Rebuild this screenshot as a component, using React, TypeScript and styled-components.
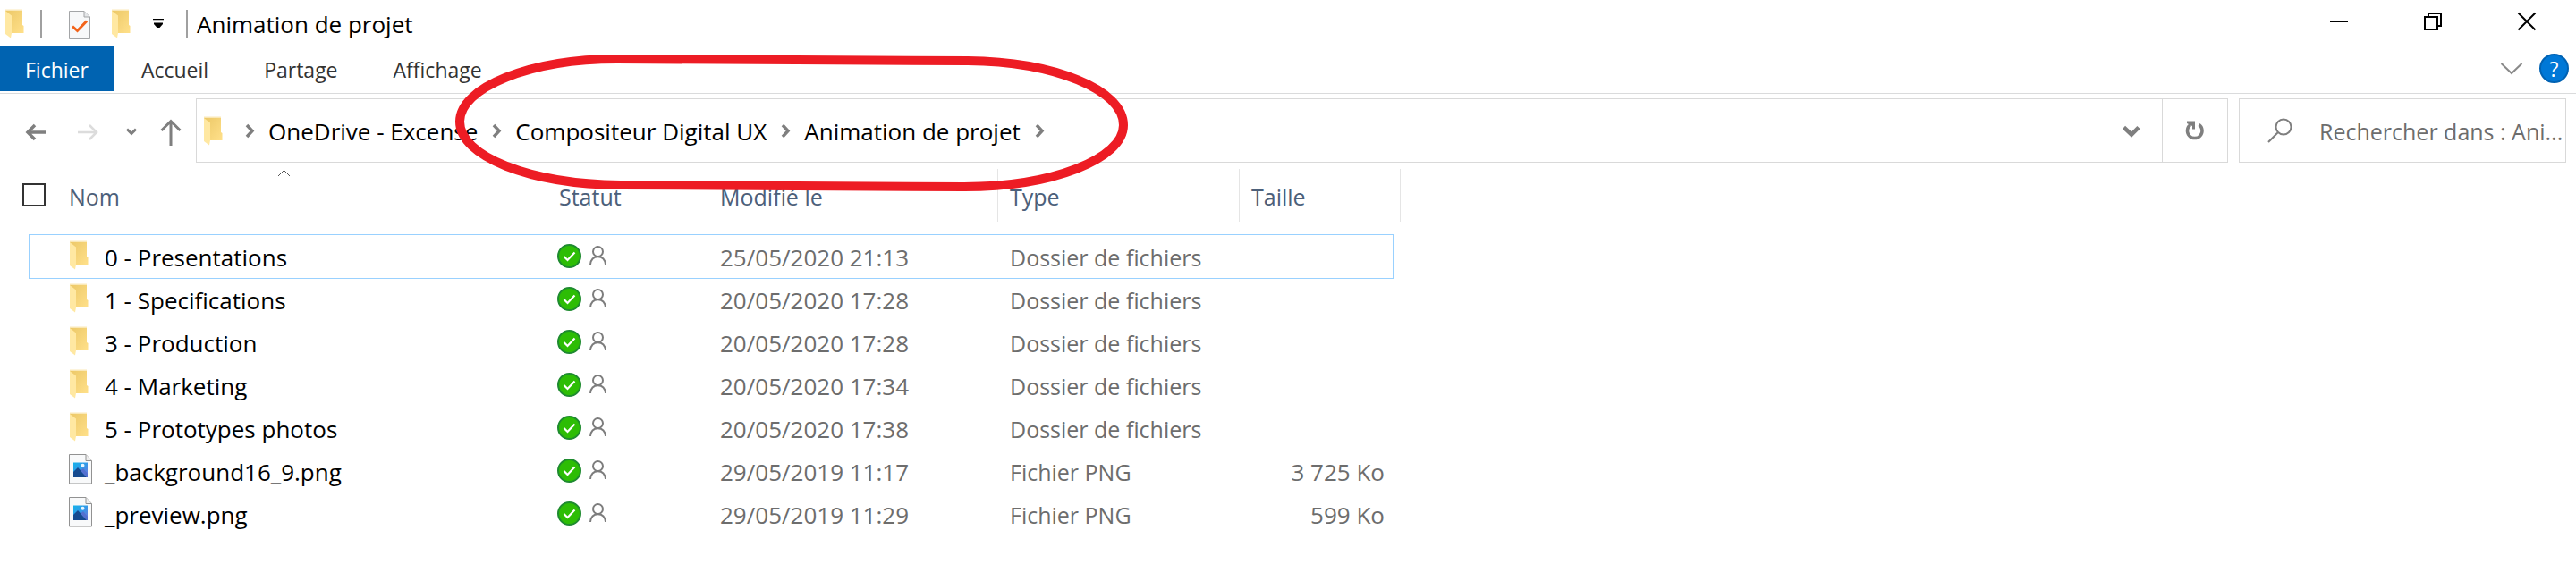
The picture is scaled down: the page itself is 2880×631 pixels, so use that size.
import React from "react";
import styled, { createGlobalStyle } from "styled-components";

const GlobalStyle = createGlobalStyle`
  *, *::before, *::after { box-sizing: border-box; }
  body {
    margin: 0;
    background: #fff;
    color: #000;
    font-family: "Open Sans", "Noto Sans", sans-serif;
    font-size: 25px;
    line-height: 34px;
  }
  svg { display: block; flex: none; }
`;

const Window = styled.div`
  position: relative;
  width: 100%;
  overflow: hidden;
`;

const IconButton = styled.button`
  display: flex;
  padding: 0;
  border: 0;
  background: none;
  color: inherit;
`;

const TitleBar = styled.header`
  display: flex;
  align-items: center;
  height: 51px;
  padding: 2px 43px 0 5px;
`;

const Divider = styled.span`
  width: 2px;
  height: 31px;
  background: #a0a0a0;
`;

const QuickAccess = styled.div`
  display: flex;
  align-items: center;
  gap: 19px;
  margin: 0 25px 0 30px;
`;

const AppIcon = styled.div`
  margin-right: 12px;
`;

const Title = styled.h1`
  margin: 0 0 0 10px;
  font-size: 26px;
  font-weight: 400;
`;

const WindowControls = styled.div`
  display: flex;
  gap: 81px;
  margin-left: auto;
  padding-bottom: 5px;
`;

const TabBar = styled.nav`
  display: flex;
  align-items: flex-start;
  height: 54px;
  border-bottom: 1px solid #dadbdc;
`;

const Tab = styled.button<{ $primary?: boolean }>`
  height: 51px;
  padding: ${(p) => (p.$primary ? "2px 28px 0" : "3px 31px 0")};
  border: 0;
  background: ${(p) => (p.$primary ? "#0063b1" : "transparent")};
  color: ${(p) => (p.$primary ? "#fff" : "#333")};
  font: inherit;
  font-size: 23px;
`;

const TabTools = styled.div`
  display: flex;
  align-items: center;
  gap: 18px;
  height: 51px;
  margin-left: auto;
  padding-right: 8px;
`;

const HelpButton = styled.button`
  width: 33px;
  height: 33px;
  padding: 0;
  border: 2px solid #0062b3;
  border-radius: 50%;
  background: #0078d7;
  color: #fff;
  font: inherit;
  font-size: 23px;
  line-height: 28px;
`;

const NavBar = styled.div`
  display: flex;
  padding: 5px 11px 0 28px;
`;

const NavButtons = styled.div`
  display: flex;
  align-items: center;
  padding: 4px 15px 0 0;
`;

const BackForward = styled.div`
  display: flex;
  gap: 34px;
  margin-right: 30px;
`;

const RecentButton = styled(IconButton)`
  margin-right: 24px;
`;

const AddressBar = styled.div`
  display: flex;
  flex: 1;
  min-width: 0;
  height: 72px;
  margin-right: 12px;
  border: 1px solid #d9d9d9;
`;

const Breadcrumbs = styled.div`
  display: flex;
  flex: 1;
  align-items: center;
  gap: 15px;
  min-width: 0;
  padding: 2px 0 0 7px;
  font-size: 26px;
  white-space: nowrap;
`;

const AddressIcon = styled.span`
  padding-right: 3px;
`;

const Crumb = styled.a`
  color: #000;
  text-decoration: none;
`;

const HistoryButton = styled(IconButton)`
  align-items: center;
  padding: 2px 25px 0;
`;

const RefreshButton = styled(IconButton)`
  align-items: center;
  justify-content: center;
  width: 73px;
  border-left: 1px solid #d9d9d9;
`;

const SearchBox = styled.label`
  display: flex;
  align-items: center;
  gap: 30px;
  width: 366px;
  height: 72px;
  padding-left: 31px;
  border: 1px solid #d9d9d9;
`;

const SearchInput = styled.input`
  flex: 1;
  min-width: 0;
  height: 60px;
  padding: 2px 0 0;
  border: 0;
  outline: 0;
  background: none;
  font: inherit;
  &::placeholder { color: #6d6d6d; opacity: 1; }
`;

const FileTable = styled.table`
  display: block;
  margin-top: 7px;
`;

const TableHead = styled.thead`
  display: block;
  margin-bottom: 14px;
`;

const TableBody = styled.tbody`
  display: block;
  padding-bottom: 2px;
`;

const HeadRow = styled.tr`
  display: grid;
  grid-template-columns: 612px 180px 324px 270px 180px;
`;

const HeadCell = styled.th`
  position: relative;
  display: flex;
  gap: 26px;
  height: 59px;
  padding: 14px 0 0 13px;
  border-right: 1px solid #e5e5e5;
  color: #4c607a;
  font-weight: 400;
  text-align: left;
  &:first-child { padding-left: 25px; }
`;

const SelectAll = styled.input`
  appearance: none;
  width: 26px;
  height: 26px;
  margin: 2px 0 0;
  border: 2px solid #333;
  background: #fff;
`;

const SortMark = styled.span`
  position: absolute;
  top: 0;
  left: 310px;
`;

const Row = styled.tr<{ $focused?: boolean }>`
  display: grid;
  grid-template-columns: 579px 180px 324px 270px 171px;
  width: 1526px;
  height: 50px;
  margin: 0 0 -2px 32px;
  border: 1px solid ${(p) => (p.$focused ? "#99d1ff" : "transparent")};
`;

const Cell = styled.td`
  display: flex;
  align-items: center;
  padding: 2px 0 0 13px;
  color: #6d6d6d;
`;

const NameCell = styled(Cell)`
  gap: 12px;
  padding-left: 44px;
  color: #000;
  font-size: 26px;
`;

const FileIcon = styled.span`
  align-self: flex-start;
  padding-top: 3px;
`;

const StatusCell = styled(Cell)`
  gap: 8px;
  padding-left: 11px;
`;

const NumberCell = styled(Cell)`
  font-size: 26px;
`;

const SizeCell = styled(NumberCell)`
  justify-content: flex-end;
  padding-right: 9px;
`;

const Annotation = styled.svg`
  position: absolute;
  top: 50px;
  left: 500px;
  pointer-events: none;
`;

const FolderIcon = () => (
  <svg width="28" height="36" viewBox="0 0 28 36" aria-hidden="true">
    <defs>
      <linearGradient id="folderBack" x1="0" x2="1" y1="0" y2="1">
        <stop offset="0" stopColor="#ecc867" />
        <stop offset="1" stopColor="#ffe08a" />
      </linearGradient>
    </defs>
    <path d="M1 2.5H20V19L21.5 20V28H7L1 6Z" fill="url(#folderBack)" />
    <path d="M1 3L8 8.500V28L7 33.500L1 29Z" fill="#ffe8a2" />
    <path d="M1 2H20" stroke="#fbe9b8" />
  </svg>
);

const PictureIcon = () => (
  <svg width="28" height="36" viewBox="0 0 28 36" aria-hidden="true">
    <defs>
      <linearGradient id="sky" x1="0" x2="1" y1="0" y2="1">
        <stop offset="0" stopColor="#15b1ea" />
        <stop offset="0.5" stopColor="#3399e8" />
        <stop offset="1" stopColor="#7a6fd8" />
      </linearGradient>
    </defs>
    <path d="M.5 .5H19L25.500 7.500V33H.5Z" fill="#f8f9fa" stroke="#929292" />
    <path d="M19 .5V7.500H25.500" fill="#eee" stroke="#929292" />
    <path d="M5 9.500H21V26H5Z" fill="url(#sky)" />
    <path d="M5 20L10 15L20 26H5Z" fill="#164a8f" />
    <path d="M13 18.500L16 16L21 22V26H20Z" fill="#5470cf" />
    <circle cx="15.500" cy="12.800" r="2" fill="#e8f6ff" />
  </svg>
);

const PropertiesIcon = () => (
  <svg width="28" height="36" viewBox="0 0 28 36" aria-hidden="true">
    <path d="M.5 3.500H17L23.500 10V34.500H.5Z" fill="#f7f8f9" stroke="#a3a5a7" />
    <path d="M17 3.500V10H23.500" fill="#e4e6e8" stroke="#a3a5a7" />
    <path d="M4 20.500L9.500 25.500L20 14.500" fill="none" stroke="#f2631a" strokeWidth="3" />
  </svg>
);

const SyncedIcon = () => (
  <svg width="28" height="31" viewBox="0 0 28 31" role="img" aria-label="Disponible">
    <circle cx="13.500" cy="13.500" r="12.500" fill="#2dbd05" stroke="#1f8b30" strokeWidth="2" />
    <path d="M7.500 14L11.500 18L19.500 9.500" fill="none" stroke="#fff" strokeWidth="2.200" />
  </svg>
);

const PersonIcon = () => (
  <svg width="20" height="31" viewBox="0 0 20 31" role="img" aria-label="Partagé">
    <g fill="none" stroke="#7d7d7d" strokeWidth="2">
      <circle cx="9.500" cy="8.500" r="5.500" />
      <path d="M1 23C1.500 17.500 4.500 14.200 9.500 14.200S17.500 17.500 18 23" />
    </g>
  </svg>
);

const CrumbChevron = () => (
  <svg width="12" height="18" viewBox="0 0 12 18" aria-hidden="true">
    <path d="M3 2L9 8.500L3 15" fill="none" stroke="#7f7f7f" strokeWidth="3.500" />
  </svg>
);

type FileEntry = { name: string; date: string; type: string; size?: string };

const folder = "Dossier de fichiers";
const files: FileEntry[] = [
  { name: "0 - Presentations", date: "25/05/2020 21:13", type: folder },
  { name: "1 - Specifications", date: "20/05/2020 17:28", type: folder },
  { name: "3 - Production", date: "20/05/2020 17:28", type: folder },
  { name: "4 - Marketing", date: "20/05/2020 17:34", type: folder },
  { name: "5 - Prototypes photos", date: "20/05/2020 17:38", type: folder },
  { name: "_background16_9.png", date: "29/05/2019 11:17", type: "Fichier PNG", size: "3 725 Ko" },
  { name: "_preview.png", date: "29/05/2019 11:29", type: "Fichier PNG", size: "599 Ko" },
];

const path = ["OneDrive - Excense", "Compositeur Digital UX", "Animation de projet"];

export default function App() {
  return (
    <Window>
      <GlobalStyle />
      <TitleBar>
        <AppIcon><FolderIcon /></AppIcon>
        <Divider />
        <QuickAccess>
          <IconButton aria-label="Propriétés"><PropertiesIcon /></IconButton>
          <IconButton aria-label="Nouveau dossier"><FolderIcon /></IconButton>
          <IconButton aria-label="Personnaliser">
            <svg width="12" height="12" viewBox="0 0 12 12">
              <path d="M0 0H12V1.300H0ZM1 4.500H11V6L7.500 10H4.500L1 6Z" />
            </svg>
          </IconButton>
        </QuickAccess>
        <Divider />
        <Title>Animation de projet</Title>
        <WindowControls>
          <IconButton aria-label="Réduire">
            <svg width="24" height="24" viewBox="0 0 24 24">
              <path d="M2 11H22V13H2Z" />
            </svg>
          </IconButton>
          <IconButton aria-label="Restaurer">
            <svg width="24" height="24" viewBox="0 0 24 24" fill="none" stroke="#000" strokeWidth="2">
              <path d="M3 7H17V21H3ZM7 7V3H21V17H17" />
            </svg>
          </IconButton>
          <IconButton aria-label="Fermer">
            <svg width="24" height="24" viewBox="0 0 24 24" fill="none" stroke="#000" strokeWidth="2">
              <path d="M2.500 2.500L21.500 21.500M21.500 2.500L2.500 21.500" />
            </svg>
          </IconButton>
        </WindowControls>
      </TitleBar>

      <TabBar>
        <Tab $primary>Fichier</Tab>
        <Tab>Accueil</Tab>
        <Tab>Partage</Tab>
        <Tab>Affichage</Tab>
        <TabTools>
          <IconButton aria-label="Développer le ruban">
            <svg width="26" height="14" viewBox="0 0 26 14">
              <path d="M1.500 1L13 12L24.500 1" fill="none" stroke="#8a8a8a" strokeWidth="2" />
            </svg>
          </IconButton>
          <HelpButton aria-label="Aide">?</HelpButton>
        </TabTools>
      </TabBar>

      <NavBar>
        <NavButtons>
          <BackForward>
            <IconButton aria-label="Précédent">
              <svg width="24" height="20" viewBox="0 0 24 20" fill="none" stroke="#7f7f7f" strokeWidth="3.500">
                <path d="M23 10H3M11 2L3 10L11 18" />
              </svg>
            </IconButton>
            <IconButton aria-label="Suivant">
              <svg width="24" height="20" viewBox="0 0 24 20" fill="none" stroke="#dcdcdc" strokeWidth="2.500">
                <path d="M1 10H22M14 2L22 10L14 18" />
              </svg>
            </IconButton>
          </BackForward>
          <RecentButton aria-label="Emplacements récents">
            <svg width="14" height="10" viewBox="0 0 14 10" fill="none" stroke="#7f7f7f" strokeWidth="3">
              <path d="M2 1.500L7 6.500L12 1.500" />
            </svg>
          </RecentButton>
          <IconButton aria-label="Dossier parent">
            <svg width="26" height="30" viewBox="0 0 26 30" fill="none" stroke="#7f7f7f" strokeWidth="3">
              <path d="M13 30V3M2.500 13L13 2.500L23.500 13" />
            </svg>
          </IconButton>
        </NavButtons>
        <AddressBar>
          <Breadcrumbs>
            <AddressIcon><FolderIcon /></AddressIcon>
            <CrumbChevron />
            {path.map((name) => (
              <React.Fragment key={name}>
                <Crumb href="#">{name}</Crumb>
                <CrumbChevron />
              </React.Fragment>
            ))}
          </Breadcrumbs>
          <HistoryButton aria-label="Historique">
            <svg width="20" height="14" viewBox="0 0 20 14" fill="none" stroke="#7f7f7f" strokeWidth="4.500">
              <path d="M2.500 2.500L11 10.500L19 2.500" />
            </svg>
          </HistoryButton>
          <RefreshButton aria-label="Actualiser">
            <svg width="22" height="22" viewBox="0 0 22 22" fill="none" stroke="#7f7f7f">
              <path d="M15.500 4.500A8.300 8.300 0 1 1 6 4.500" strokeWidth="3.500" />
              <path d="M2 .5H11V9.500H8V6L2 3Z" fill="#7f7f7f" stroke="none" />
            </svg>
          </RefreshButton>
        </AddressBar>
        <SearchBox>
          <svg width="28" height="28" viewBox="0 0 28 28" fill="none" stroke="#7f7f7f" strokeWidth="2" aria-hidden="true">
            <circle cx="18" cy="10" r="8.500" />
            <path d="M12 16L1 27" />
          </svg>
          <SearchInput type="text" aria-label="Rechercher" placeholder="Rechercher dans : Ani..." />
        </SearchBox>
      </NavBar>

      <FileTable>
        <TableHead>
          <HeadRow>
            <HeadCell>
              <SelectAll type="checkbox" aria-label="Tout sélectionner" />
              Nom
              <SortMark>
                <svg width="15" height="9" viewBox="0 0 15 9">
                  <path d="M1 8L7.500 1.500L14 8" fill="none" stroke="#555" />
                </svg>
              </SortMark>
            </HeadCell>
            <HeadCell>Statut</HeadCell>
            <HeadCell>Modifié le</HeadCell>
            <HeadCell>Type</HeadCell>
            <HeadCell>Taille</HeadCell>
          </HeadRow>
        </TableHead>
        <TableBody>
          {files.map((file, index) => (
            <Row key={file.name} $focused={index === 0}>
              <NameCell>
                <FileIcon>{file.size ? <PictureIcon /> : <FolderIcon />}</FileIcon>
                {file.name}
              </NameCell>
              <StatusCell>
                <SyncedIcon />
                <PersonIcon />
              </StatusCell>
              <NumberCell>{file.date}</NumberCell>
              <Cell>{file.type}</Cell>
              <SizeCell>{file.size}</SizeCell>
            </Row>
          ))}
        </TableBody>
      </FileTable>

      <Annotation width="770" height="170" viewBox="500 50 770 170" aria-hidden="true">
        <path
          d="M514 136C514 98 592 66 690 66L1082 68C1178 69 1256 100 1256 140C1256 178 1176 209 1078 209L694 207C592 206 514 175 514 136Z"
          fill="none"
          stroke="#ed1c24"
          strokeWidth="10"
        />
      </Annotation>
    </Window>
  );
}
